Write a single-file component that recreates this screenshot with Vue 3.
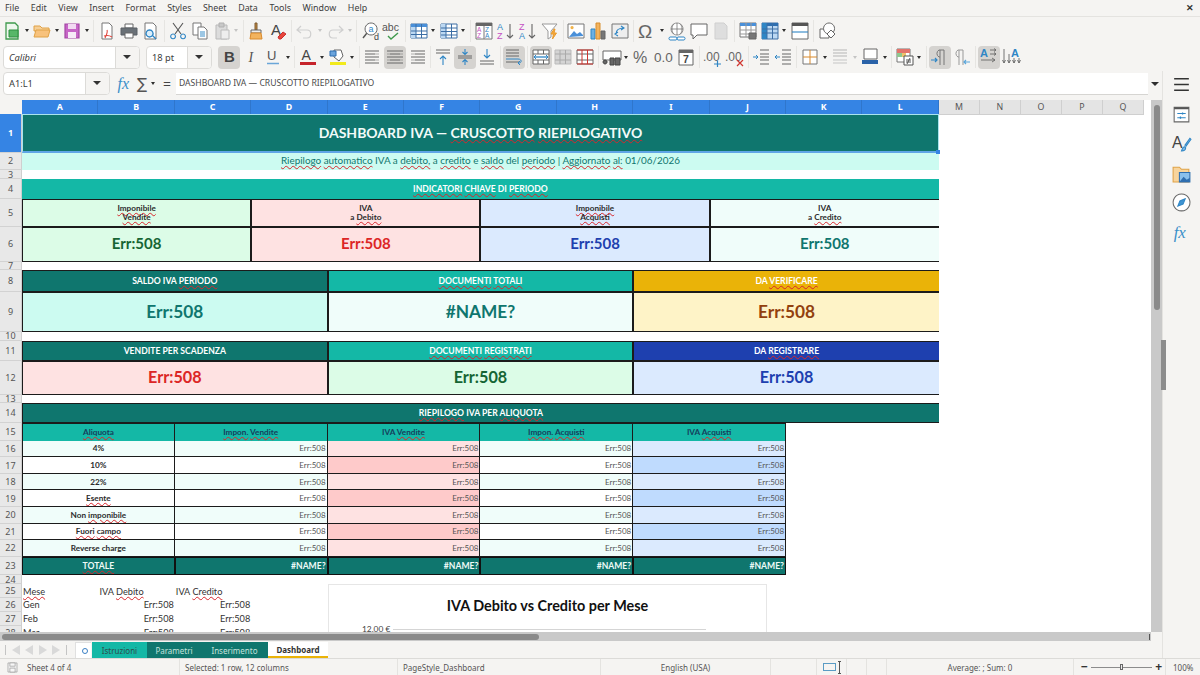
<script setup>
import { h } from 'vue'

const BAD = new Set(['CRUSCOTTO', 'RIEPILOGATIVO', 'Riepilogo', 'automatico', 'debito,', 'credito', 'saldo', 'periodo', 'Aggiornato', 'al:',
  'INDICATORI', 'CHIAVE', 'PERIODO', 'Imponibile', 'Vendite', 'Debito', 'Acquisti', 'Credito', 'DOCUMENTI', 'TOTALI', 'REGISTRATI',
  'VERIFICARE', 'REGISTRARE', 'RIEPILOGO', 'ALIQUOTA', 'Aliquota', 'Impon.', 'Esente', 'imponibile', 'Fuori', 'campo', 'TOTALE', 'Mese'])

// marca in rosso le parole che il correttore non conosce
const Sp = ({ text }) => h('span', { class: 'txt' }, text.split(/( )/).map(w => (BAD.has(w) ? h('span', { class: 'sp' }, w) : w)))
Sp.props = ['text']

const p = (d, s = 'none', f = 'none', w = 1) => ({ d, s, f, w })
const t = (txt, x, y, z, f, b = 400, font = 'Liberation Sans') => ({ txt, x, y, z, f, b, font })

const lines = (c, ys, x1 = 3, x2 = 17) => p(ys.map(y => `M${x1} ${y}H${x2}`).join(''), c)
const GRID = '#3c6ea5'

const ICONS = {
  new: [p('M4 2h9l3 3v13H4z', '#3f9a4d', '#eef7ee', 1.3), p('M7 9h9v7H7z', '#2f8f41', '#57b768')],
  open: [p('M2 5h6l2 2h7v3H2z', '#e0a247', '#f6cf96'), p('M2 16l2-7h14l-2 7z', '#e0a247', '#f8c27c')],
  save: [p('M3 3h14v14H3z', '#a347a3', '#c765c7', 1.2), p('M6 3h8v5H6z', 'none', '#f2daf2'), p('M6 11h8v6H6z', 'none', '#f7e9f7')],
  pdf: [p('M5 2h7l3 3v13H5z', '#777', '#fff'), p('M8 17c2-4 3-6 2-8M7 15c3-1 5-1 8 1', '#e0453c', 'none', 1.1)],
  print: [p('M6 3h8v4H6z', '#666', '#fff'), p('M2 7h16v7H2z', '#5a6066', '#6a7177'), p('M6 12h8v5H6z', '#666', '#fff')],
  preview: [p('M4 2h8l3 3v13H4z', '#777', '#fff'), p('M8.5 9a3.5 3.5 0 1 0 .1 0zM11 14l4 4', '#2f86c5', '#dceefa', 1.3)],
  cut: [p('M5 2l8 11M15 2L7 13', '#555', 'none', 1.1), p('M5 13a2.4 2.4 0 1 0 .1 0zM15 13a2.4 2.4 0 1 0 .1 0z', '#2f86c5', 'none', 1.1)],
  copy: [p('M3 2h8v12H3z', '#777', '#fff'), p('M8 6h6l3 3v9H8z', '#777', '#fff'), lines('#3a8fc9', [11, 13, 15], 10, 15)],
  paste: [p('M4 4h11v14H4z', '#b9b9b9', '#dcdcdc'), p('M7 2h5v4H7z', '#b0b0b0', '#c8c8c8'), p('M9 9h8v9H9z', '#bcbcbc', '#eee')],
  clone: [p('M9 2h2v7H9z', '#7b5a33', '#c58a3e'), p('M5 9h10v3H5z', '#666', '#eee'), p('M5 12h10l1 6H4z', '#d98a2c', '#f2b35e')],
  clear: [t('A', 3, 14, 15, '#444'), p('M10 16l5-5 3 2-5 5h-2z', '#c93030', '#e8463c')],
  undo: [p('M6 5L2 9l4 3M2 9h10c5 0 5 8 0 8H8', '#cfcfcf', 'none', 1.2)],
  redo: [p('M14 5l4 4-4 3M18 9H8c-5 0-5 8 0 8h4', '#cfcfcf', 'none', 1.2)],
  find: [p('M3 17l4-5', '#555', 'none', 1.4), p('M11 2a6 6 0 1 0 .1 0z', '#666', '#fff'), t('a', 8.5, 11, 9, '#2f86c5'), t('d', 14, 19, 9, '#444')],
  spell: [t('abc', 0, 10, 10.5, '#555'), p('M6 15l3 3 7-6', '#3f9a4d', 'none', 1.4)],
  table: [p('M2 3h16v14H2z', GRID, '#fff'), p('M2 3h16v3H2z', 'none', '#4a90d9'), p('M2 6h5v11H2z', 'none', '#bcd8f2'), p('M2 10h16M2 13.5h16M7 3v14M12.5 3v14', GRID)],
  table2: [p('M2 3h16v14H2z', GRID, '#fff'), p('M2 3h5v14H2z', 'none', '#bcd8f2'), p('M2 7h16M2 10.5h16M2 14h16M7 3v14M12.5 3v14', GRID)],
  sort: [p('M2 2h16v16H2z', '#777', '#fff'), p('M2 2h16v3H2z', 'none', '#666'), p('M10 5v13', '#777'), t('A', 3, 11, 6.5, '#c44fc4'), t('Z', 3, 17, 6.5, '#c44fc4'), t('Z', 11, 11, 6.5, '#2f86c5'), t('A', 11, 17, 6.5, '#2f86c5')],
  asc: [t('A', 1, 9, 9, '#2f86c5'), t('Z', 1, 18, 9, '#c44fc4'), p('M14 3v14M11 14l3 3 3-3', '#666', 'none', 1.1)],
  desc: [t('Z', 1, 9, 9, '#c44fc4'), t('A', 1, 18, 9, '#2f86c5'), p('M14 3v14M11 14l3 3 3-3', '#666', 'none', 1.1)],
  filter: [p('M2 3h15l-6 7v6l-3 2v-8z', '#999', '#fff'), p('M14 8l-3 5h2.5l-1 5 4-6h-2.5l1-4z', '#e99a2d', '#f3a93c')],
  image: [p('M2 3h16v14H2z', '#777', '#fff'), p('M3 16l5-6 3 3 3-2 3 3v1z', 'none', '#4a90d9'), p('M6 5a1.6 1.6 0 1 0 .1 0z', 'none', '#f1b34a')],
  chart: [p('M3 8h4v10H3z', '#2f86c5', '#6bb0e4'), p('M8 2h4v16H8z', '#d88d2c', '#f2b35e'), p('M13 10h4v8h-4z', '#666', '#777')],
  pivot: [p('M2 3h16v14H2z', '#777', '#eee'), p('M6 13c0-4 3-6 8-6M11 5l3 2-3 2M8 15l-3-2 3-2', '#2f86c5', 'none', 1.1)],
  omega: [t('Ω', 1, 17, 19, '#666')],
  link: [p('M10 2a6 6 0 1 0 .1 0zM4 8h12M10 2v12M6.5 3c-2 3-2 7 0 10M13.5 3c2 3 2 7 0 10', '#777', '#fff', 0.8), p('M3 16h6a1.6 1.6 0 0 1 0 3H3a1.6 1.6 0 0 1 0-3zM11 16h6a1.6 1.6 0 0 1 0 3h-6a1.6 1.6 0 0 1 0-3z', '#2f86c5', '#fff')],
  comment: [p('M2 3h16v11H8l-4 4v-4H2z', '#666', '#fff', 1)],
  note: [p('M4 2h9l3 3v13H4z', '#cfcfcf', '#dedede')],
  freeze: [p('M2 2h16v14H2z', '#777', '#fff'), p('M2 2h16v3H2z', 'none', '#4a90d9'), p('M2 9h16M2 13h16M8 2v14M13 2v14', '#999'), p('M11 12h7v6h-7z', '#666', '#777')],
  freeze2: [p('M2 2h16v16H2z', GRID, '#bcd8f2'), p('M2 2h16v3H2z', 'none', '#2f6fb0'), p('M2 2h5v16H2z', 'none', '#2f86c5'), p('M2 8h16M2 12h16M7 2v16M12.5 2v16', GRID)],
  split: [p('M2 2h16v16H2z', '#666', '#fff'), p('M2 2h16v3H2z', 'none', '#555'), p('M2 11h16', '#2f86c5', 'none', 1.1)],
  shapes: [p('M3 8h9v9H3z', '#666', '#fff'), p('M12 2a5.5 5.5 0 1 0 .1 0z', '#666', '#fff'), p('M14 9l4 4-4 4-4-4z', '#666', '#fff')],
  bold: [t('B', 5, 15, 15, '#444', 700)],
  italic: [t('I', 7.5, 15, 14, '#555', 400, 'Liberation Serif')],
  under: [t('U', 4, 13, 13, '#555'), p('M4 16.5h12', '#6aa6d8', 'none', 1.5)],
  color: [t('A', 3.5, 13, 14, '#444'), p('M2 15h16v3H2z', 'none', '#c6242b')],
  hilite: [p('M6 3h7l2 6-4 5-5-4z', '#666', '#fff'), p('M2 4h6v5H2z', '#2f6fb0', '#6ba4dc'), p('M2 15h16v3H2z', 'none', '#f2ea1c')],
  left: [lines('#666', [4, 7, 10, 13, 16], 2, 16), lines('#f5f4f2', [7, 13], 12, 16)],
  center: [lines('#666', [4, 7, 10, 13, 16], 2, 18), lines('#d5d3d0', [7, 13], 2, 5), lines('#d5d3d0', [7, 13], 15, 18)],
  right: [lines('#666', [4, 7, 10, 13, 16], 4, 18), lines('#f5f4f2', [7, 13], 4, 8)],
  top: [lines('#666', [3, 6], 3, 17), p('M10 18V9M7 12l3-3 3 3', '#2f86c5', 'none', 1.1)],
  middle: [lines('#666', [9, 11], 3, 17), p('M10 2v5M7.5 5l2.5 2.5L12.5 5M10 18v-5M7.5 15l2.5-2.5 2.5 2.5', '#2f86c5', 'none', 1.1)],
  bottom: [lines('#666', [14, 17], 3, 17), p('M10 2v9M7 8l3 3 3-3', '#2f86c5', 'none', 1.1)],
  wrap: [lines('#666', [3, 6, 9, 15], 2, 15), p('M2 12h12c4 0 4 4 1 4M16 14l-2 2 2 2', '#2f86c5', 'none', 1)],
  merge: [p('M2 3h16v14H2z', '#666', '#fff'), p('M2 7h16M2 13h16M7 3v4M12.5 3v4M7 13v4M12.5 13v4', '#666'), p('M3 10h14', '#2f86c5', 'none', 1.3), p('M5 8l-2 2 2 2M15 8l2 2-2 2', '#2f86c5')],
  unmerge: [p('M2 3h16v14H2z', '#bbb', '#d4d4d4'), p('M2 7h16M2 13h16M7 3v14M12.5 3v14', '#aaa')],
  split3: [p('M2 3h16v14H2z', '#666', '#fff'), p('M2 7h16M2 13h16', '#666'), p('M7 3v14M12.5 3v14M2 3h16M2 17h16', '#d0352f', 'none', 1)],
  currency: [p('M1 4h18v9H1z', '#666', '#fff'), p('M3 13a2 2 0 1 0 .1 0zM8 11h4v7H8zM13 11h5v7h-5z', '#444', '#666')],
  percent: [t('%', 1, 16, 16, '#666')],
  number: [t('0.0', 0, 15, 13.5, '#666')],
  date: [p('M3 3h14v15H3z', '#666', '#fff'), p('M3 3h14v3H3z', 'none', '#666'), t('7', 7, 16, 10.5, '#444', 700)],
  addDec: [t('.00', 0, 14, 12, '#666'), p('M11 17h7M14.5 13.5v7', '#2f86c5', 'none', 1.2)],
  delDec: [t('.00', 0, 14, 12, '#666'), p('M12 13l6 6M18 13l-6 6', '#d0352f', 'none', 1.2)],
  indent: [lines('#666', [3, 7, 10, 13, 17], 9, 18), p('M2 10h5M5 8l2 2-2 2', '#2f86c5')],
  outdent: [lines('#666', [3, 7, 10, 13, 17], 9, 18), p('M7 10H2M4 8l-2 2 2 2', '#2f86c5')],
  borders: [p('M3 3h14v14H3z', '#777', '#fff'), p('M10 3v14M3 10h14', '#d98a2c')],
  lineStyle: [lines('#b5b5b5', [3, 6, 9], 3, 17), lines('#c5c5c5', [13, 16], 3, 17)],
  lineColor: [p('M4 2h13v10H4z', '#666', '#fff'), p('M2 13h16v4H2z', 'none', '#2a62a8')],
  cond: [p('M2 2h13v13H2z', '#777', '#fff'), p('M2 2h13v4H2z', 'none', '#e2746c'), p('M2 6h5v4H2z', 'none', '#8fc78f'), p('M7 6h4v4H7z', 'none', '#f0c36d'), p('M9 9h9v9H9z', '#555', '#fff'), p('M11 13h5M11 15h5M15 11l-3 6', '#555')],
  ltr: [p('M10 3v15M14 3v15M14 3h-5a4 4 0 0 0 0 7h1', '#777', 'none', 1), p('M1 13h6M5 11l2 2-2 2', '#2f86c5', 'none', 1.2)],
  rtl: [p('M7 3v15M11 3v15M11 3H6a4 4 0 0 0 0 7h1', '#999', 'none', 1), p('M18 15h-6M14 13l-2 2 2 2', '#5aa6db', 'none', 1.2)],
  horiz: [t('A', 1, 10, 11, '#2f86c5', 700), p('M2 13h14M13 11l3 2-3 2M11 3h6M15 1.5l2 1.5-2 1.5M11 7h6M15 5.5l2 1.5-2 1.5', '#666', 'none', 0.9)],
  vert: [t('A', 10, 10, 11, '#2f86c5', 700), p('M3 2v14M1.5 13L3 16l1.5-3M8 7v9M6.5 13L8 16l1.5-3M13 11v5M11.5 13l1.5 3 1.5-3M18 11v5M16.5 13l1.5 3 1.5-3', '#666', 'none', 0.9)],
  menu: [p('M3 4.5h14M3 10h14M3 15.5h14', '#333', 'none', 1.5)],
  props: [p('M3 3h14v14H3z', '#666', '#fff'), p('M3 3h14v2H3z', 'none', '#555'), p('M6 9h8M6 13h8', '#2f86c5'), p('M11 8v2M9 12v2', '#2f86c5', 'none', 1.2)],
  styles: [t('A', 1, 14, 15, '#444'), p('M10 17c1-3 2-4 3-4l1 1c0 2-2 3-4 3zM13 12l5-7 1 1-5 7', '#2f86c5', '#7db8e5')],
  gallery: [p('M2 4h6l2 2h7v12H2z', '#e0a247', '#f8d49c'), p('M8 9h10v9H8z', '#2f6fb0', '#8ac0ec'), p('M8 18l4-5 3 3 3-2v4z', 'none', '#2f6fb0')],
  navi: [p('M10 2a8 8 0 1 0 .1 0z', '#666', '#fff'), p('M13.5 6.5l-5 2-2 5 5-2z', '#2f86c5', '#3f94d3')],
  fx: [t('fx', 2.5, 15, 16, '#3a8fc9', 400, 'Liberation Serif')],
  disk: [p('M3 3h14v14H3z', '#999', '#eee'), p('M6 3h8v5H6zM6 11h8v6H6z', '#999', '#f7f7f7')],
}
const italicIcons = new Set(['fx', 'italic'])

const Ico = ({ name, size = 20 }) => h('svg', { viewBox: '0 0 20 20', width: size, height: size },
  (ICONS[name] || []).map(q => (q.txt
    ? h('text', { x: q.x, y: q.y, fill: q.f, 'font-size': q.z, 'font-weight': q.b, 'font-family': q.font, 'font-style': italicIcons.has(name) ? 'italic' : 'normal' }, q.txt)
    : h('path', { d: q.d, stroke: q.s, fill: q.f, 'stroke-width': q.w }))))
Ico.props = ['name', 'size']

const menus = ['File', 'Edit', 'View', 'Insert', 'Format', 'Styles', 'Sheet', 'Data', 'Tools', 'Window', 'Help']

// '|' separatore, 'v' freccia, 'x' freccia spenta, '*' pulsante attivo
const row1 = ['new', 'v', 'open', 'v', 'save', 'v', '|', 'pdf', 'print', 'preview', '|', 'cut', 'copy', 'paste', 'x', '|', 'clone', 'clear', '|',
  'undo', 'x', 'redo', 'x', '|', 'find', 'spell', '|', 'table', 'v', 'table2', 'v', '|', 'sort', 'asc', 'desc', 'filter', '|', 'image', 'chart', 'pivot', '|',
  'omega', 'v', 'link', 'comment', 'note', '|', 'freeze', 'freeze2', 'v', 'split', '|', 'shapes']
const row2 = ['*bold', 'italic', 'under', 'v', '|', 'color', 'v', 'hilite', 'v', '|', 'left', '*center', 'right', '|', 'top', '*middle', 'bottom', '|',
  '*wrap', '|', '*merge', 'unmerge', 'split3', '|', 'currency', 'v', 'percent', 'number', 'date', '|', 'addDec', 'delDec', '|', 'indent', 'outdent', '|',
  'borders', 'v', 'lineStyle', 'x', 'lineColor', 'v', '|', 'cond', 'v', '|', '*ltr', 'rtl', '|', '*horiz', 'vert']

const colsOn = 'ABCDEFGHIJKL'.split('')
const colsOff = 'MNOPQ'.split('')

// altezze delle righe del foglio, in px
const HEIGHTS = [38.7, 17.6, 9, 19.7, 27.7, 35, 8.3, 22.3, 39.7, 9, 20.3, 33.4, 8, 20.6, 17.4, 16.6, 16.6, 16.6, 16.6, 16.6, 16.6, 16.6, 18.1, 9.3, 13.7, 13.8, 14, 14]
const rh = n => ({ height: HEIGHTS[n - 1] + 'px' })

const kpis = [
  { label: ['Imponibile', 'Vendite'], cls: 'green' },
  { label: ['IVA', 'a Debito'], cls: 'red' },
  { label: ['Imponibile', 'Acquisti'], cls: 'blue' },
  { label: ['IVA', 'a Credito'], cls: 'mint' },
]
const bigA = [
  { title: 'SALDO IVA PERIODO', head: 'dark', body: 'aqua', val: 'Err:508' },
  { title: 'DOCUMENTI TOTALI', head: 'teal', body: 'mint', val: '#NAME?' },
  { title: 'DA VERIFICARE', head: 'amber', body: 'cream', val: 'Err:508' },
]
const bigB = [
  { title: 'VENDITE PER SCADENZA', head: 'dark', body: 'red', val: 'Err:508' },
  { title: 'DOCUMENTI REGISTRATI', head: 'teal', body: 'green', val: 'Err:508' },
  { title: 'DA REGISTRARE', head: 'navy', body: 'blue', val: 'Err:508' },
]
const tableHead = ['Aliquota', 'Impon. Vendite', 'IVA Vendite', 'Impon. Acquisti', 'IVA Acquisti']
const aliquote = ['4%', '10%', '22%', 'Esente', 'Non imponibile', 'Fuori campo', 'Reverse charge']
const months = ['Gen', 'Feb', 'Mar']
</script>

<template>
  <div class="app">
    <nav class="menubar">
      <span v-for="m in menus" :key="m">{{ m }}</span>
      <span class="close-doc">✕</span>
    </nav>

    <div class="main">
      <div class="work">
        <div class="toolbar">
          <template v-for="(it, i) in row1" :key="i">
            <span v-if="it === '|'" class="sep"></span>
            <span v-else-if="it === 'v' || it === 'x'" class="drop" :class="{ off: it === 'x' }"></span>
            <span v-else class="btn"><Ico :name="it" /></span>
          </template>
        </div>

        <div class="toolbar">
          <div class="combo font-box"><span class="combo-text italic">Calibri</span><span class="combo-arrow"></span></div>
          <div class="combo size-box"><span class="combo-text">18 pt</span><span class="combo-arrow"></span></div>
          <template v-for="(it, i) in row2" :key="i">
            <span v-if="it === '|'" class="sep"></span>
            <span v-else-if="it === 'v' || it === 'x'" class="drop" :class="{ off: it === 'x' }"></span>
            <span v-else class="btn" :class="{ on: it[0] === '*' }"><Ico :name="it.replace('*', '')" /></span>
          </template>
        </div>

        <div class="formula">
          <div class="combo name-box"><span class="combo-text">A1:L1</span><span class="combo-arrow"></span></div>
          <span class="btn fx-btn"><Ico name="fx" /></span>
          <span class="sigma">∑</span>
          <span class="drop"></span>
          <span class="equal">=</span>
          <div class="formula-input">DASHBOARD IVA — CRUSCOTTO RIEPILOGATIVO</div>
          <span class="drop big"></span>
        </div>

        <div class="sheet-wrap">
          <div class="sheet">
            <div class="head-row">
              <div class="corner"></div>
              <div v-for="c in colsOn" :key="c" class="col-h on">{{ c }}</div>
              <div v-for="c in colsOff" :key="c" class="col-h">{{ c }}</div>
            </div>

            <div class="row" :style="rh(1)">
              <div class="row-h on">1</div>
              <div class="cell title s12"><Sp text="DASHBOARD IVA — CRUSCOTTO RIEPILOGATIVO" /></div>
            </div>
            <div class="row" :style="rh(2)">
              <div class="row-h">2</div>
              <div class="cell subtitle s12"><Sp text="Riepilogo automatico IVA a debito, a credito e saldo del periodo | Aggiornato al: 01/06/2026" /></div>
            </div>
            <div class="row" :style="rh(3)"><div class="row-h">3</div></div>
            <div class="row" :style="rh(4)">
              <div class="row-h">4</div>
              <div class="cell band teal s12"><Sp text="INDICATORI CHIAVE DI PERIODO" /></div>
            </div>

            <!-- indicatori -->
            <div class="row" :style="rh(5)">
              <div class="row-h">5</div>
              <div v-for="k in kpis" :key="k.label.join()" class="cell kpi-label s3 bx" :class="k.cls">
                <Sp :text="k.label[0]" /><Sp :text="k.label[1]" />
              </div>
            </div>
            <div class="row" :style="rh(6)">
              <div class="row-h">6</div>
              <div v-for="k in kpis" :key="k.label.join()" class="cell kpi-val s3 bx" :class="k.cls">Err:508</div>
            </div>
            <div class="row" :style="rh(7)"><div class="row-h">7</div></div>

            <div class="row" :style="rh(8)">
              <div class="row-h">8</div>
              <div v-for="b in bigA" :key="b.title" class="cell band s4 bx" :class="b.head"><Sp :text="b.title" /></div>
            </div>
            <div class="row" :style="rh(9)">
              <div class="row-h">9</div>
              <div v-for="b in bigA" :key="b.title" class="cell big-val s4 bx" :class="b.body">{{ b.val }}</div>
            </div>
            <div class="row" :style="rh(10)"><div class="row-h">10</div></div>

            <div class="row" :style="rh(11)">
              <div class="row-h">11</div>
              <div v-for="b in bigB" :key="b.title" class="cell band s4 bx" :class="b.head"><Sp :text="b.title" /></div>
            </div>
            <div class="row" :style="rh(12)">
              <div class="row-h">12</div>
              <div v-for="b in bigB" :key="b.title" class="cell big-val small s4 bx" :class="b.body">{{ b.val }}</div>
            </div>
            <div class="row" :style="rh(13)"><div class="row-h">13</div></div>

            <!-- riepilogo per aliquota -->
            <div class="row" :style="rh(14)">
              <div class="row-h">14</div>
              <div class="cell band dark s12 bx"><Sp text="RIEPILOGO IVA PER ALIQUOTA" /></div>
            </div>
            <div class="row" :style="rh(15)">
              <div class="row-h">15</div>
              <div v-for="th in tableHead" :key="th" class="cell th teal s2"><Sp :text="th" /></div>
            </div>
            <div v-for="(a, i) in aliquote" :key="a" class="row" :style="rh(16 + i)">
              <div class="row-h">{{ 16 + i }}</div>
              <div class="cell td lab s2" :class="{ stripe: i % 2 === 0 }"><Sp :text="a" /></div>
              <div class="cell td num s2" :class="{ stripe: i % 2 === 0 }">Err:508</div>
              <div class="cell td num s2" :class="i % 2 === 0 ? 'red' : 'red2'">Err:508</div>
              <div class="cell td num s2" :class="{ stripe: i % 2 === 0 }">Err:508</div>
              <div class="cell td num s2" :class="i % 2 === 0 ? 'blue' : 'blue2'">Err:508</div>
            </div>
            <div class="row" :style="rh(23)">
              <div class="row-h">23</div>
              <div class="cell tot s2"><Sp text="TOTALE" /></div>
              <div v-for="n in 4" :key="n" class="cell tot num s2">#NAME?</div>
            </div>
            <div class="row" :style="rh(24)"><div class="row-h">24</div></div>

            <!-- dati del grafico -->
            <div class="row" :style="rh(25)">
              <div class="row-h">25</div>
              <div class="cell plain"><Sp text="Mese" /></div>
              <div class="cell plain"><Sp text="IVA Debito" /></div>
              <div class="cell plain"><Sp text="IVA Credito" /></div>
            </div>
            <div v-for="(m, i) in months" :key="m" class="row" :style="rh(26 + i)">
              <div class="row-h">{{ 26 + i }}</div>
              <div class="cell plain">{{ m }}</div>
              <div class="cell plain right">Err:508</div>
              <div class="cell plain right">Err:508</div>
            </div>

            <!-- grafico flottante sopra le celle -->
            <div class="chart">
              <h3 class="chart-title">IVA Debito vs Credito per Mese</h3>
              <div class="chart-axis"><span>12,00 €</span><i></i></div>
            </div>
          </div>

          <div class="v-scroll"><span class="v-thumb"></span></div>
        </div>

        <div class="h-scroll"><span class="h-thumb"></span><span class="h-end"></span></div>

        <div class="tabs">
          <div class="tab-nav">
            <span class="nav-bar"></span><span class="nav-tri l"></span><span class="nav-tri l"></span><span class="nav-tri r"></span><span class="nav-tri r"></span><span class="nav-bar"></span>
          </div>
          <div class="tab-new"><i></i></div>
          <div class="tab t-teal">Istruzioni</div>
          <div class="tab t-dark">Parametri</div>
          <div class="tab t-dark wide">Inserimento</div>
          <div class="tab t-cur">Dashboard</div>
        </div>
      </div>

      <aside class="sidebar">
        <span v-for="n in ['menu', 'props', 'styles', 'gallery', 'navi', 'fx']" :key="n" class="side-btn"><Ico :name="n" :size="21" /></span>
        <span class="side-grip"></span>
      </aside>
    </div>

    <footer class="status">
      <span class="st st-a"><Ico name="disk" :size="13" /><b>Sheet 4 of 4</b></span>
      <span class="st st-b">Selected: 1 row, 12 columns</span>
      <span class="st st-c">PageStyle_Dashboard</span>
      <span class="st st-d">English (USA)</span>
      <span class="st st-e"></span>
      <span class="st st-f"><i class="sel-box"></i><i class="sel-cur"></i></span>
      <span class="st st-g"></span>
      <span class="st st-g"></span>
      <span class="st st-h">Average: ; Sum: 0</span>
      <span class="st st-i"><b>−</b><i class="zoom-line"><u></u></i><b>+</b></span>
      <span class="st st-j">100%</span>
    </footer>
  </div>
</template>

<style>
html, body { margin: 0; background: #f5f4f2; overflow: hidden; }
.sp { text-decoration: underline wavy #d8262c; text-decoration-thickness: 1px; text-underline-offset: 1px; }
.txt { white-space: pre; }
</style>

<style scoped>
.app {
  width: 1200px;
  height: 675px;
  display: flex;
  flex-direction: column;
  overflow: hidden;
  background: #f5f4f2;
  font-family: "Noto Sans", sans-serif;
  font-size: 9.3px;
  color: #3d3d3d;
}

.menubar {
  height: 17px;
  flex: none;
  display: flex;
  align-items: center;
  gap: 11.6px;
  padding: 0 0 1px 5px;
  box-sizing: border-box;
  border-bottom: 1px solid #e4e3e0;
  font-size: 8.9px;
}
.close-doc { margin-left: auto; margin-right: 6px; font-size: 9px; font-weight: 700; color: #333; }

.main { flex: 1; display: flex; min-height: 0; }
.work { width: 1162px; flex: none; display: flex; flex-direction: column; }

.toolbar { height: 27px; flex: none; display: flex; align-items: center; padding-left: 1px; }
.toolbar + .toolbar { height: 26px; padding-left: 3px; }

.btn { width: 22px; height: 23px; flex: none; display: flex; align-items: center; justify-content: center; border-radius: 4px; }
.btn.on { background: #d5d3d0; }
.sep { width: 4.8px; height: 22px; flex: none; position: relative; }
.sep::after { content: ''; position: absolute; left: 2px; top: 0; bottom: 0; width: 1px; background: #e6e5e2; }
.drop { width: 8px; flex: none; height: 6px; position: relative; }
.drop::after {
  content: '';
  position: absolute;
  left: 1.5px;
  top: 1.5px;
  border-left: 2.5px solid transparent;
  border-right: 2.5px solid transparent;
  border-top: 3px solid #2e2e2e;
}
.drop.off::after { border-top-color: #c4c4c4; }
.drop.big::after { border-left-width: 4px; border-right-width: 4px; border-top-width: 4px; left: 0; }

.combo {
  height: 23px;
  box-sizing: border-box;
  flex: none;
  display: flex;
  align-items: center;
  background: #fff;
  border: 1px solid #dcdbd8;
  border-radius: 4px;
  overflow: hidden;
}
.combo-text { flex: 1; padding-left: 5px; color: #3d3d3d; }
.combo-text.italic { font-style: italic; }
.combo-arrow { width: 23px; align-self: stretch; background: #f5f4f2; border-left: 1px solid #dcdbd8; position: relative; }
.combo-arrow::after {
  content: '';
  position: absolute;
  left: 7px;
  top: 8px;
  border-left: 4px solid transparent;
  border-right: 4px solid transparent;
  border-top: 4px solid #333;
}
.font-box { width: 137px; margin-right: 6px; }
.size-box { width: 66px; margin-right: 6px; }
.name-box { width: 107px; }

.formula { height: 27px; flex: none; display: flex; align-items: center; padding-left: 3px; }
.fx-btn { margin-left: 4px; }
.sigma { width: 14px; text-align: center; font-size: 15px; color: #555; font-family: "DejaVu Sans", sans-serif; margin-left: -1px; }
.equal { width: 16px; margin-left: 2px; text-align: center; font-size: 14px; color: #444; }
.formula-input {
  width: 972px;
  height: 22px;
  line-height: 21px;
  box-sizing: border-box;
  margin: 0 3px 0 1px;
  padding-left: 3px;
  background: #fff;
  border-bottom: 1px solid #d6d5d2;
  font-size: 8.6px;
  color: #4a4a4a;
}

.sheet-wrap { height: 532px; margin-top: 3px; flex: none; display: flex; }
.sheet {
  width: 1151px;
  flex: none;
  position: relative;
  overflow: hidden;
  background: #fff;
  font-family: Lato, sans-serif;
  color: #222;
}

.head-row { height: 14px; display: grid; grid-template-columns: 22px repeat(12, 76.42px) repeat(5, 41px) 1fr; }
.corner { background: #f5f4f2; }
.col-h {
  background: #e4e4e4;
  border-right: 1px solid #cfcfcf;
  border-bottom: 1px solid #cfcfcf;
  box-sizing: border-box;
  font-family: "Noto Sans", sans-serif;
  font-size: 8.8px;
  line-height: 14px;
  text-align: center;
  color: #555;
}
.col-h.on { background: #3584e4; color: #fff; font-weight: 700; border-right-color: #2f76cc; border-bottom: 1px solid #9cc7f5; }

.row { display: grid; grid-template-columns: 22px repeat(12, 76.42px) 1fr; }
.row-h {
  background: #e8e8e8;
  border-right: 1px solid #cfcfcf;
  border-bottom: 1px solid #d2d2d2;
  box-sizing: border-box;
  font-family: "Noto Sans", sans-serif;
  font-size: 9px;
  line-height: 7px;
  color: #555;
  display: flex;
  align-items: center;
  justify-content: center;
}
.row-h.on { background: #3584e4; color: #fff; font-weight: 700; }

.cell { box-sizing: border-box; min-width: 0; display: flex; align-items: center; justify-content: center; overflow: hidden; white-space: nowrap; }
.s2 { grid-column-end: span 2; }
.s3 { grid-column-end: span 3; }
.s4 { grid-column-end: span 4; }
.s12 { grid-column-end: span 12; }

.bx { border: 1px solid #1b1b1b; }
.bx:last-child { border-right: 0; }

.title {
  background: #0f766e;
  color: #f2fbf9;
  font-size: 14px;
  font-weight: 700;
  position: relative;
  border: 1px solid #a9e3ee;
  border-bottom: 2px solid #5fa5e6;
  overflow: visible;
}
.title::after { content: ''; position: absolute; right: -2px; bottom: -3px; width: 4px; height: 4px; background: #3584e4; }
.subtitle { background: #ccfbf1; color: #0f766e; font-size: 9.9px; padding-bottom: 2px; }

.band { color: #fff; font-size: 8.6px; font-weight: 700; }
.teal { background: #14b8a6; }
.dark { background: #0f766e; }
.amber { background: #eab308; }
.navy { background: #1e40af; }
.green { background: #dcfce7; color: #166534; }
.red { background: #fee2e2; color: #dc2626; }
.red2 { background: #fecaca; }
.blue { background: #dbeafe; color: #1e40af; }
.blue2 { background: #bfdbfe; }
.mint { background: #f0fdfa; color: #0f766e; }
.aqua { background: #ccfbf1; color: #0f766e; }
.cream { background: #fef3c7; color: #92400e; }

.kpi-label { flex-direction: column; font-size: 8.2px; font-weight: 700; line-height: 9px; color: #2c2c2c; padding-top: 1px; }
.kpi-val { font-size: 15px; font-weight: 700; padding-bottom: 2px; }
.big-val { font-size: 17.3px; font-weight: 700; padding-bottom: 2px; }
.big-val.small { font-size: 16.2px; padding-bottom: 3px; }

.th { font-size: 8.2px; font-weight: 700; color: #14405c; border: 1px solid #1b1b1b; border-bottom: 0; border-left-width: 0; }
.th:nth-child(2) { border-left-width: 1px; }
.td { font-size: 8px; color: #555; border-right: 1px solid #1b1b1b; border-bottom: 1px solid #1b1b1b; }
.td.red, .td.blue { color: #555; }
.td.lab { font-weight: 700; color: #2c2c2c; font-size: 8.2px; border-left: 1px solid #1b1b1b; }
.stripe { background: #f0fdfa; }
.num { justify-content: flex-end; padding-right: 1px; }
.tot { background: #0f766e; color: #eefaf7; font-size: 8.6px; font-weight: 700; border: 1px solid #111; }

.plain { justify-content: flex-start; font-size: 9.2px; color: #333; padding-left: 1px; overflow: visible; }
.plain.right { justify-content: flex-end; padding: 0 1px 0 0; }

.chart {
  position: absolute;
  left: 328px;
  top: 484px;
  width: 439px;
  height: 120px;
  box-sizing: border-box;
  background: #fff;
  border: 1px solid #e6e6e6;
}
.chart-title { margin: 12px 0 0; text-align: center; font-size: 14.4px; font-weight: 700; color: #111; line-height: 18px; }
.chart-axis { display: flex; align-items: center; gap: 3px; margin: 9px 0 0 33px; font-size: 8.4px; color: #444; }
.chart-axis i { width: 313px; height: 1px; background: #d5d5d5; }

.v-scroll { width: 11px; flex: none; background: #c9c9c9; padding: 5px 2px 0; box-sizing: border-box; }
.v-thumb { display: block; width: 6px; height: 205px; border-radius: 3px; background: #8a8a8a; margin-left: 0.5px; }

.h-scroll { height: 9px; flex: none; width: 1151px; background: #c9c9c9; display: flex; align-items: center; padding-left: 2px; box-sizing: border-box; }
.h-thumb { width: 537px; height: 6px; border-radius: 3px; background: #8a8a8a; }
.h-end { width: 1px; height: 6px; background: #555; margin-left: auto; margin-right: 1px; }

.tabs { height: 17px; flex: none; display: flex; padding-top: 1px; box-sizing: border-box; font-size: 8px; }
.tab-nav { width: 62px; margin-left: 5px; display: flex; align-items: center; justify-content: space-between; }
.nav-bar { width: 1px; height: 10px; background: #c4c4c4; }
.nav-tri { width: 0; height: 0; border-top: 5px solid transparent; border-bottom: 5px solid transparent; }
.nav-tri.l { border-right: 8px solid #d9d9d9; }
.nav-tri.r { border-left: 8px solid #d9d9d9; }
.tab-new { width: 16px; margin-left: 8px; background: #fff; border: 1px solid #e0e0e0; border-width: 1px 0 0 1px; box-sizing: border-box; display: flex; align-items: center; justify-content: flex-end; padding-right: 3px; }
.tab-new i { width: 4px; height: 4px; border-radius: 50%; border: 1px solid #3a7fc4; }
.tab { width: 54px; display: flex; align-items: center; justify-content: center; box-sizing: border-box; }
.t-teal { width: 55px; margin-left: 1px; background: #14b8a6; color: #2d4d4a; }
.t-dark { background: #0f766e; color: #c5e3dd; }
.t-dark.wide { width: 67px; }
.t-cur { width: 60px; background: #fff; color: #333; font-weight: 700; border-bottom: 2px solid #eab308; }

.sidebar {
  width: 38px;
  flex: none;
  margin-top: 54px;
  border-left: 1px solid #e4e3e0;
  box-sizing: border-box;
  display: flex;
  flex-direction: column;
  align-items: center;
  padding-top: 3px;
  gap: 8.5px;
  position: relative;
}
.side-btn { height: 21px; display: flex; }
.side-grip { position: absolute; left: -2px; top: 269px; width: 5px; height: 50px; background: #8c8c8c; }

.status {
  height: 17px;
  flex: none;
  display: flex;
  align-items: center;
  border-top: 1px solid #dcdbd8;
  box-sizing: border-box;
  font-size: 8px;
  color: #555;
}
.st { height: 100%; box-sizing: border-box; display: flex; align-items: center; border-right: 1px solid #e4e3e0; flex: none; }
.st b { font-weight: 400; }
.st-a { width: 180px; padding-left: 6px; gap: 8px; }
.st-b { width: 218px; padding-left: 5px; }
.st-c { width: 203px; padding-left: 5px; }
.st-d { width: 170px; justify-content: center; }
.st-e { width: 46px; }
.st-f { width: 30px; padding-left: 6px; gap: 2px; }
.sel-box { width: 11px; height: 6px; border: 1px solid #5a9bc4; }
.sel-cur { width: 3px; height: 11px; border: solid #555; border-width: 1px 0; position: relative; }
.sel-cur::after { content: ''; position: absolute; left: 1px; top: 0; bottom: 0; width: 1px; background: #555; }
.st-g { width: 20px; }
.st-h { width: 187px; justify-content: center; }
.st-i { width: 92px; padding: 0 3px 0 7px; gap: 3px; color: #333; }
.st-i b { font-size: 12px; font-weight: 700; line-height: 1; }
.zoom-line { flex: 1; height: 1px; background: #8c8c8c; position: relative; }
.zoom-line u { position: absolute; left: 29px; top: -3px; width: 3px; height: 6px; border: 1px solid #666; background: #eee; box-sizing: border-box; }
.st-j { flex: 1; border: 0; padding-left: 7px; }
</style>
